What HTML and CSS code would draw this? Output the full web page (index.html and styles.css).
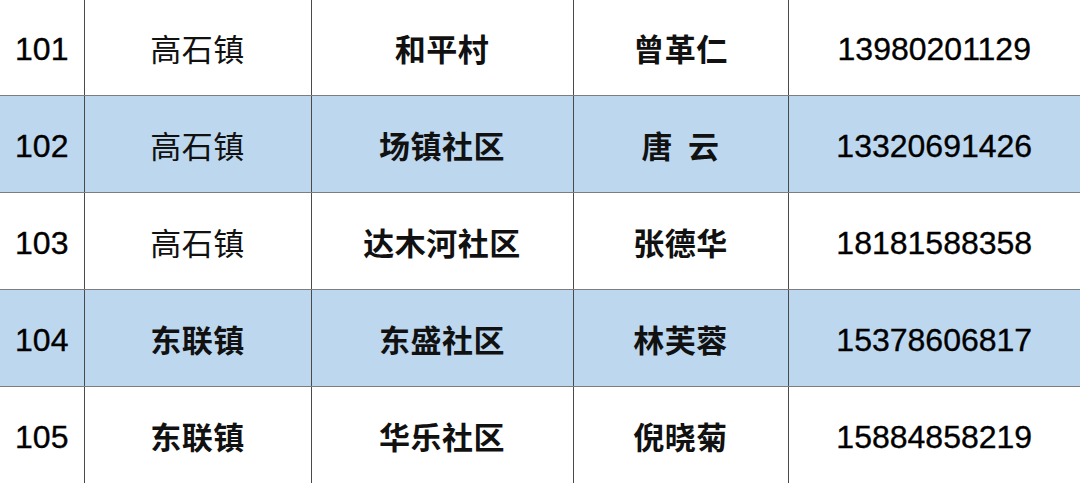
FILE: index.html
```html
<!DOCTYPE html>
<html lang="zh-CN">
<head>
<meta charset="utf-8">
<title>联系表</title>
<link rel="stylesheet" href="styles.css">
</head>
<body>
<table class="sheet">
  <colgroup>
    <col class="c-no"><col class="c-town"><col class="c-vil"><col class="c-name"><col class="c-tel">
  </colgroup>
  <tbody>
    <tr>
      <td class="num"><span>101</span></td><td class="light">高石镇</td><td>和平村</td><td>曾革仁</td><td class="num"><span>13980201129</span></td>
    </tr>
    <tr class="blue">
      <td class="num"><span>102</span></td><td class="light">高石镇</td><td>场镇社区</td><td>唐&nbsp;&nbsp;云</td><td class="num"><span>13320691426</span></td>
    </tr>
    <tr>
      <td class="num"><span>103</span></td><td class="light">高石镇</td><td>达木河社区</td><td>张德华</td><td class="num"><span>18181588358</span></td>
    </tr>
    <tr class="blue">
      <td class="num"><span>104</span></td><td>东联镇</td><td>东盛社区</td><td>林芙蓉</td><td class="num"><span>15378606817</span></td>
    </tr>
    <tr>
      <td class="num"><span>105</span></td><td>东联镇</td><td>华乐社区</td><td>倪晓菊</td><td class="num"><span>15884858219</span></td>
    </tr>
  </tbody>
</table>
</body>
</html>
```
FILE: styles.css
```css
html, body {
  margin: 0;
  padding: 0;
  background: #ffffff;
}
.sheet {
  width: 1080px;
  table-layout: fixed;
  border-collapse: collapse;
  font-family: "Noto Sans CJK SC", "Liberation Sans", sans-serif;
  color: #111;
}
.c-no { width: 84px; }
.c-town { width: 227px; }
.c-vil { width: 262px; }
.c-name { width: 215px; }
.c-tel { width: 292px; }
.sheet td {
  height: 96px;
  padding: 0;
  text-align: center;
  vertical-align: middle;
  font-size: 31px;
  font-weight: 700;
  letter-spacing: 0.5px;
  border-left: 1px solid #4a4a4a;
  border-bottom: 1px solid #7d7d7d;
  line-height: 1;
}
.sheet tr:first-child td { height: 95px; }
.sheet td:first-child { border-left: none; }
.sheet td.light { font-weight: 400; }
.sheet td.num {
  font-family: "Liberation Sans", Arial, sans-serif;
  font-weight: 400;
  font-size: 32px;
  letter-spacing: 0;
  color: #000;
  -webkit-text-stroke: 0.35px #000;
}
.sheet td.num span {
  display: inline-block;
  padding-top: 3px;
}
.sheet tr.blue td { background: #bdd7ee; }
```
